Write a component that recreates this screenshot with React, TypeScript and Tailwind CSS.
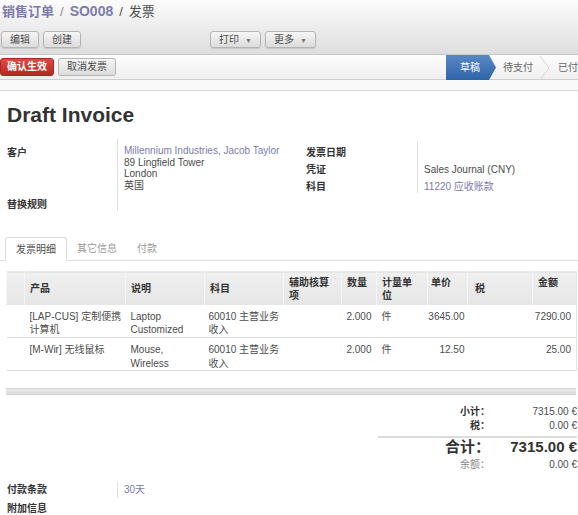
import React from "react";

type Line = {
  product: string;
  desc: string;
  account: string;
  qty: string;
  uom: string;
  price: string;
  amount: string;
};

const lines: Line[] = [
  {
    product: "[LAP-CUS] 定制便携计算机",
    desc: "Laptop Customized",
    account: "60010 主营业务收入",
    qty: "2.000",
    uom: "件",
    price: "3645.00",
    amount: "7290.00",
  },
  {
    product: "[M-Wir] 无线鼠标",
    desc: "Mouse, Wireless",
    account: "60010 主营业务收入",
    qty: "2.000",
    uom: "件",
    price: "12.50",
    amount: "25.00",
  },
];

function Btn({ children }: { children: React.ReactNode }) {
  return (
    <button className="h-[17px] px-[8px] rounded-[3px] border border-[#b5b5b5] bg-gradient-to-b from-[#f6f6f6] to-[#dcdcdc] text-[10px] leading-[15px] text-[#4c4c4c] shadow-[0_1px_1px_rgba(0,0,0,0.12)]">
      {children}
    </button>
  );
}

function Chevron() {
  return (
    <svg width="10" height="24" viewBox="0 0 10 24" className="shrink-0">
      <polyline points="0,0 9,12 0,24" fill="none" stroke="#d4d4d4" strokeWidth="1" />
    </svg>
  );
}

export default function App() {
  return (
    <div className="w-[578px] h-[515px] overflow-hidden bg-white text-[10px] text-[#4c4c4c] font-['Liberation_Sans','Noto_Sans_CJK_SC',sans-serif]">
      {/* Header */}
      <div className="h-[55px] bg-gradient-to-b from-[#fcfcfc] to-[#dedede] border-b border-[#c8c8c8]">
        <div className="pt-[2px] pl-[2px] text-[13px] leading-[18px] font-bold">
          <span className="text-[#7c7bad]">销售订单</span>
          <span className="text-[#8a8a8a] font-normal px-[6px]">/</span>
          <span className="text-[#7c7bad] text-[14px]">SO008</span>
          <span className="text-[#4c4c4c] font-normal px-[6px]">/</span>
          <span className="text-[#4c4c4c] font-normal">发票</span>
        </div>
        <div className="flex items-center mt-[10px] pl-[1px]">
          <div className="flex gap-[4px]">
            <Btn>编辑</Btn>
            <Btn>创建</Btn>
          </div>
          <div className="flex gap-[4px] ml-[129px]">
            <Btn>
              打印<span className="text-[7px] text-[#777] ml-[6px]">▼</span>
            </Btn>
            <Btn>
              更多<span className="text-[7px] text-[#777] ml-[6px]">▼</span>
            </Btn>
          </div>
        </div>
      </div>

      {/* Action / status bar */}
      <div className="h-[25px] flex items-center justify-between bg-gradient-to-b from-[#fdfdfd] to-[#efefef] border-b border-[#cfcfcf]">
        <div className="flex gap-[4px] items-center">
          <button className="h-[18px] px-[6px] rounded-[3px] border border-[#a52a24] bg-gradient-to-b from-[#df4a43] to-[#b32821] text-white text-[10px] leading-[16px] font-bold">
            确认生效
          </button>
          <button className="h-[18px] px-[8px] rounded-[3px] border border-[#b5b5b5] bg-gradient-to-b from-[#f6f6f6] to-[#dcdcdc] text-[10px] leading-[16px] text-[#4c4c4c]">
            取消发票
          </button>
        </div>
        <div className="flex items-center h-[25px] self-stretch">
          <div className="h-full w-[50px] pl-[14px] flex items-center bg-gradient-to-b from-[#5a89c6] to-[#2f63a8] text-white [clip-path:polygon(0_0,calc(100%-7px)_0,100%_50%,calc(100%-7px)_100%,0_100%)]">
            草稿
          </div>
          <div className="px-[7px] text-[#666]">待支付</div>
          <Chevron />
          <div className="pl-[8px] text-[#666] whitespace-nowrap">已付</div>
        </div>
      </div>
      <div className="h-[11px] bg-[#f9f9f9] border-b border-[#d9d9d9]" />

      {/* Sheet */}
      <div className="pl-[7px]">
        <h1 className="mt-[12px] text-[21px] leading-[24px] font-bold text-[#333]">
          Draft Invoice
        </h1>

        <div className="flex mt-[18px]">
          {/* left group */}
          <div className="w-[299px] flex">
            <div className="w-[110px] font-bold text-[#333] leading-[12px] flex flex-col">
              <div className="pt-[2px]">客户</div>
              <div className="mt-[40px]">替换规则</div>
            </div>
            <div className="border-l border-[#e0e0e0] pl-[6px] pb-[14px] leading-[11.6px] -mt-[6px]">
              <div className="pt-[6px] text-[#7c7bad]">Millennium Industries, Jacob Taylor</div>
              <div>89 Lingfield Tower</div>
              <div>London</div>
              <div>英国</div>
            </div>
          </div>
          {/* right group */}
          <div className="flex">
            <div className="w-[111px] font-bold text-[#333] leading-[17px] -mt-[1px]">
              <div>发票日期</div>
              <div>凭证</div>
              <div>科目</div>
            </div>
            <div className="border-l border-[#e0e0e0] pl-[6px] leading-[17px] h-[52px] -mt-[4px] pt-[3px]">
              <div>&nbsp;</div>
              <div>Sales Journal (CNY)</div>
              <div className="text-[#7c7bad]">11220 应收账款</div>
            </div>
          </div>
        </div>
      </div>

      {/* Tabs */}
      <div className="mt-[26px] flex items-end h-[24px] border-b border-[#dcdcdc] pl-[5px]">
        <div className="h-[24px] px-[10px] flex items-center border border-b-white border-[#dcdcdc] rounded-t-[3px] bg-white -mb-px text-[#4c4c4c]">
          发票明细
        </div>
        <div className="h-[24px] px-[10px] flex items-center text-[#999]">其它信息</div>
        <div className="h-[24px] px-[10px] flex items-center text-[#999]">付款</div>
      </div>

      {/* Lines table */}
      <div className="pl-[6px] mt-[10px]">
        <table className="table-fixed w-[570px] border-collapse border-r border-[#e4e4e4]">
          <colgroup>
            <col className="w-[18px]" />
            <col className="w-[101px]" />
            <col className="w-[79px]" />
            <col className="w-[79px]" />
            <col className="w-[58px]" />
            <col className="w-[35px]" />
            <col className="w-[51px]" />
            <col className="w-[40px]" />
            <col className="w-[65px]" />
            <col className="w-[44px]" />
          </colgroup>
          <thead>
            <tr className="h-[33px] bg-gradient-to-b from-[#efefef] to-[#e6e6e6] border-t border-[#e8e8e8] text-left font-bold text-[#333] leading-[13px]">
              <th className="border-l border-[#f6f6f6]" />
              <th className="border-l border-[#f6f6f6] px-[5px] align-middle">产品</th>
              <th className="border-l border-[#f6f6f6] px-[5px] align-middle">说明</th>
              <th className="border-l border-[#f6f6f6] px-[5px] align-middle">科目</th>
              <th className="border-l border-[#f6f6f6] px-[5px] align-top pt-[4px]">辅助核算项</th>
              <th className="border-l border-[#f6f6f6] px-[5px] align-top pt-[4px]">数量</th>
              <th className="border-l border-[#f6f6f6] pl-[5px] pr-[12px] align-top pt-[4px]">计量单位</th>
              <th className="border-l border-[#f6f6f6] px-[3px] align-top pt-[4px]">单价</th>
              <th className="border-l border-[#f6f6f6] px-[7px] align-middle">税</th>
              <th className="border-l border-[#f6f6f6] px-[5px] align-top pt-[4px]">金额</th>
            </tr>
          </thead>
          <tbody className="leading-[13.5px]">
            {lines.map((l) => (
              <tr key={l.product} className="h-[33px] border-b border-[#dedede] align-top">
                <td />
                <td className="pl-[5px] pr-0 pt-[5px]">{l.product}</td>
                <td className="px-[5px] pt-[5px]">{l.desc}</td>
                <td className="pl-[4px] pr-0 pt-[5px]">{l.account}</td>
                <td className="px-[5px] pt-[5px]" />
                <td className="pr-[5px] pt-[5px] text-right">{l.qty}</td>
                <td className="px-[5px] pt-[5px]">{l.uom}</td>
                <td className="pr-[3px] pt-[5px] text-right">{l.price}</td>
                <td className="px-[5px] pt-[5px]" />
                <td className="pr-[5px] pt-[5px] text-right">{l.amount}</td>
              </tr>
            ))}
          </tbody>
        </table>
        <div className="mt-[17px] w-[570px] h-[7px] border-y border-[#d4d4d4] bg-gradient-to-b from-[#e9e9e9] to-[#dadada]" />
      </div>

      {/* Totals */}
      <div className="flex justify-end mt-[9px] pr-[1px]">
        <div className="w-[199px]">
          <div className="flex leading-[15px]">
            <div className="w-[112px] text-right font-bold text-[#333]">小计：</div>
            <div className="flex-1 text-right">7315.00 €</div>
          </div>
          <div className="flex leading-[14px]">
            <div className="w-[112px] text-right font-bold text-[#333]">税：</div>
            <div className="flex-1 text-right">0.00 €</div>
          </div>
          <div className="mt-[3px] border-t-2 border-[#dcdcdc] flex items-center h-[18px]">
            <div className="w-[112px] text-right font-bold text-[15px] leading-[17px] text-[#333]">合计：</div>
            <div className="flex-1 text-right font-bold text-[15px] leading-[17px] text-[#333]">7315.00 €</div>
          </div>
          <div className="flex leading-[14px] mt-[4px]">
            <div className="w-[112px] text-right text-[#888]">余额：</div>
            <div className="flex-1 text-right">0.00 €</div>
          </div>
        </div>
      </div>

      {/* Payment terms */}
      <div className="pl-[7px] mt-[9px]">
        <div className="flex items-center h-[17px]">
          <div className="w-[110px] font-bold text-[#333]">付款条款</div>
          <div className="border-l border-[#e0e0e0] pl-[6px] h-[17px] flex items-center text-[#7c7bad]">30天</div>
        </div>
        <div className="mt-[4px] font-bold text-[#333] leading-[14px]">附加信息</div>
      </div>
    </div>
  );
}
